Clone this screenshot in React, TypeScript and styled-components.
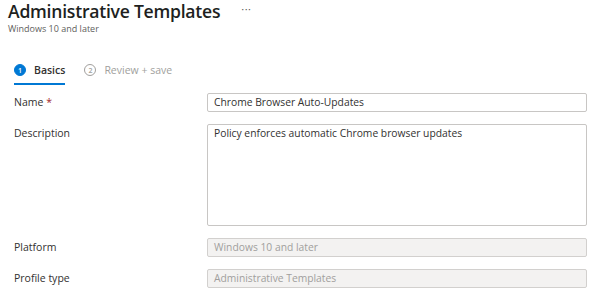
import styled, { createGlobalStyle } from 'styled-components';

const GlobalStyles = createGlobalStyle`
  html, body {
    margin: 0;
    padding: 0;
    background: #ffffff;
  }
  body {
    font-family: 'Open Sans', 'Noto Sans', sans-serif;
    color: #323130;
  }
`;

const Page = styled.div`
  width: 600px;
  height: 300px;
  overflow: hidden;
  padding: 0 13px 0 8px;
  box-sizing: border-box;
`;

const Header = styled.header`
  display: flex;
  flex-direction: column;
`;

const TitleRow = styled.div`
  display: flex;
  align-items: center;
  gap: 21px;
  height: 23px;
`;

const Title = styled.h1`
  margin: 0;
  font-size: 17.6px;
  font-weight: 600;
  line-height: 23px;
  letter-spacing: -0.25px;
  color: #201f1e;
  white-space: nowrap;
`;

const More = styled.span`
  font-size: 11px;
  line-height: 12px;
  color: #605e5c;
  letter-spacing: 0.5px;
  margin-top: -6px;
`;

const Subtitle = styled.div`
  font-size: 9px;
  line-height: 12px;
  color: #605e5c;
`;

const Steps = styled.nav`
  display: flex;
  gap: 19px;
  margin: 23px 0 0 6px;
`;

const Step = styled.div<{ $active?: boolean }>`
  display: flex;
  align-items: center;
  gap: 8px;
  height: 24px;
  padding-bottom: 1px;
  border-bottom: 2px solid ${p => (p.$active ? '#0078d4' : 'transparent')};
  font-size: 10.5px;
  font-weight: ${p => (p.$active ? 600 : 400)};
  color: ${p => (p.$active ? '#323130' : '#a19f9d')};
`;

const StepBadge = styled.span<{ $active?: boolean }>`
  display: inline-flex;
  align-items: center;
  justify-content: center;
  width: 12px;
  height: 12px;
  border-radius: 50%;
  box-sizing: border-box;
  font-size: 7px;
  font-weight: 600;
  background: ${p => (p.$active ? '#0078d4' : '#ffffff')};
  color: ${p => (p.$active ? '#ffffff' : '#a19f9d')};
  border: 1px solid ${p => (p.$active ? '#0078d4' : '#a19f9d')};
`;

const Form = styled.div`
  display: flex;
  flex-direction: column;
  gap: 12px;
  margin: 8px 0 0 6px;
`;

const Row = styled.div`
  display: grid;
  grid-template-columns: 193px 1fr;
  align-items: start;
`;

const Label = styled.label`
  font-size: 10.5px;
  line-height: 19px;
  color: #323130;
`;

const Required = styled.span`
  color: #a4262c;
  margin-left: 3px;
`;

const Field = styled.div<{ $disabled?: boolean; $tall?: boolean }>`
  height: ${p => (p.$tall ? '102px' : '19px')};
  box-sizing: border-box;
  border: 1px solid ${p => (p.$disabled ? '#d2d0ce' : '#c8c6c4')};
  border-radius: 2px;
  background: ${p => (p.$disabled ? '#f3f2f1' : '#ffffff')};
  color: ${p => (p.$disabled ? '#a19f9d' : '#323130')};
  font-size: 10.3px;
  line-height: 17px;
  padding: 0 6px;
  white-space: nowrap;
`;

export default function App() {
  return (
    <>
      <GlobalStyles />
      <Page>
        <Header>
          <TitleRow>
            <Title>Administrative Templates</Title>
            <More>···</More>
          </TitleRow>
          <Subtitle>Windows 10 and later</Subtitle>
        </Header>
        <Steps>
          <Step $active>
            <StepBadge $active>1</StepBadge>
            Basics
          </Step>
          <Step>
            <StepBadge>2</StepBadge>
            Review + save
          </Step>
        </Steps>
        <Form>
          <Row>
            <Label>
              Name<Required>*</Required>
            </Label>
            <Field>Chrome Browser Auto-Updates</Field>
          </Row>
          <Row>
            <Label>Description</Label>
            <Field $tall>Policy enforces automatic Chrome browser updates</Field>
          </Row>
          <Row>
            <Label>Platform</Label>
            <Field $disabled>Windows 10 and later</Field>
          </Row>
          <Row>
            <Label>Profile type</Label>
            <Field $disabled>Administrative Templates</Field>
          </Row>
        </Form>
      </Page>
    </>
  );
}
